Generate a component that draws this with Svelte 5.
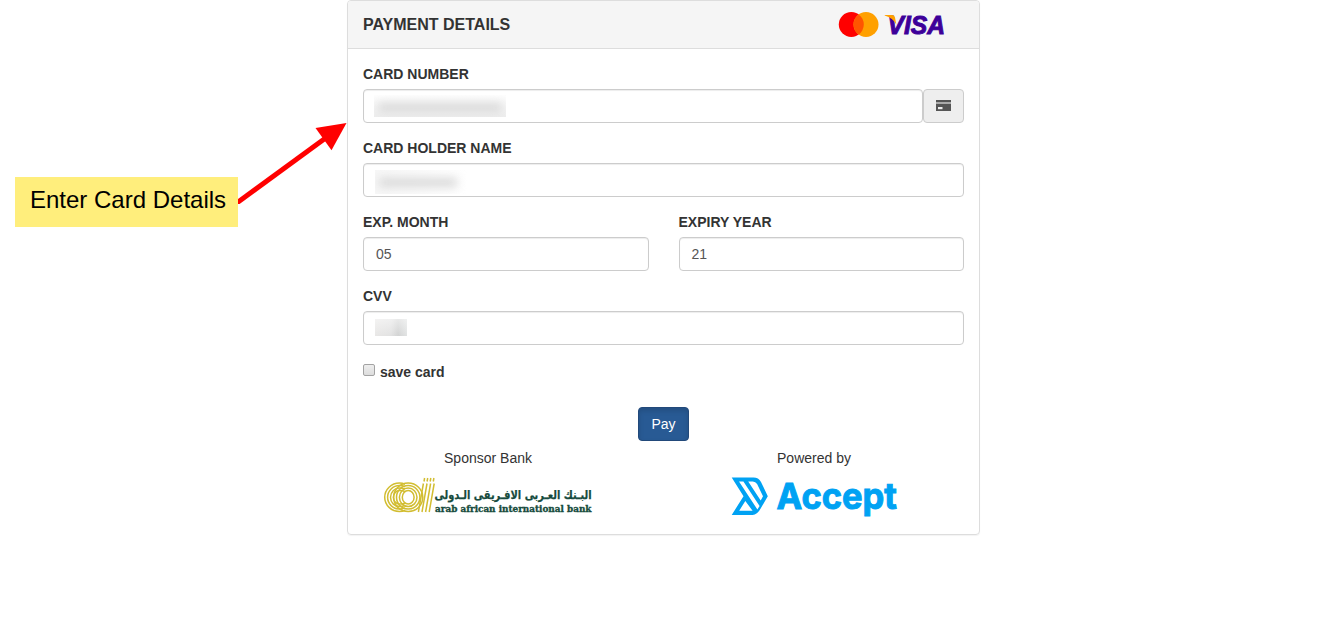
<script>
  let save = $state(false);
  const rings = [0, 1, 2, 3];
</script>

<main>
  <aside class="note">Enter Card Details</aside>
  <section class="panel">
    <header>
      <h1>PAYMENT DETAILS</h1>
      <svg class="brands" width="110" height="28" viewBox="0 0 110 28">
        <circle cx="13.3" cy="13.5" r="12.5" fill="#f00" />
        <circle cx="28" cy="13.5" r="12.5" fill="#ffa000" />
        <path d="M20.65 3.4a12.5 12.5 0 0 1 0 20.2a12.5 12.5 0 0 1 0-20.2z" fill="#ff5500" />
        <text x="49.5" y="22.5" textLength="57.5" lengthAdjust="spacingAndGlyphs" class="visa">VISA</text>
        <path d="M46.7 4h7.6q2.2.4 2.7 2.5l1.3 7Q55 6.8 46.7 4.5z" fill="#ffa000" />
      </svg>
    </header>
    <div class="body">
      <div class="group">
        <label for="num">CARD NUMBER</label>
        <div class="line">
          <div class="control" id="num"><span class="mask number"><i></i></span></div>
          <span class="addon">
            <svg width="15" height="11" viewBox="0 0 15 11"><path d="M0 0h15v11H0z" fill="#555" /><path d="M0 2h15v2H0z" fill="#aaa" /><path d="M2 7h4.5v2.2H2z" fill="#eee" /></svg>
          </span>
        </div>
      </div>
      <div class="group">
        <label for="name">CARD HOLDER NAME</label>
        <div class="control" id="name"><span class="mask holder"><i></i></span></div>
      </div>
      <div class="columns">
        <div class="group"><label for="month">EXP. MONTH</label><div class="control" id="month">05</div></div>
        <div class="group"><label for="year">EXPIRY YEAR</label><div class="control" id="year">21</div></div>
      </div>
      <div class="group">
        <label for="cvv">CVV</label>
        <div class="control" id="cvv"><span class="mask code"></span></div>
      </div>
      <label class="save"><input type="checkbox" bind:checked={save} /><span>save card</span></label>
      <div class="action"><button>Pay</button></div>
      <footer>
        <div class="sponsor">
          <p>Sponsor Bank</p>
          <svg width="212" height="44" viewBox="0 0 212 44">
            <g fill="none" stroke="#d2bd31" stroke-width="1.5">
              {#each rings as r}
                <path d={`M22 ${10.3 + r * 2.4}Q19.5 ${9 + r * 2.5} 16.5 ${9 + r * 2.5}A${14.8 - r * 2.9} ${14.3 - r * 2.5} 0 0 0 16.5 ${37.6 - r * 2.5}Q19.5 ${37.6 - r * 2.5} 22 ${36.3 - r * 2.4}`} />
                <ellipse cx="25.2" cy="23.3" rx={14.6 - r * 2.9} ry={14.3 - r * 2.5} />
                <path d={`M${35.4 + r * 3.6} 38L${40.4 + r * 3.6} 9.5M${41 + r * 3.1} 7.5l.6-3.5`} />
              {/each}
            </g>
            <text class="arabic" x="208.5" y="24.5" direction="rtl" textLength="157" lengthAdjust="spacingAndGlyphs">البـنك العـربى الافـريقى الـدولى</text>
            <text class="bank" x="52" y="37.7" textLength="156.5" lengthAdjust="spacingAndGlyphs">arab african international bank</text>
          </svg>
        </div>
        <div class="powered">
          <p>Powered by</p>
          <svg width="168" height="44" viewBox="0 0 168 44">
            <path d="M.7 3.6H22.5Q27.5 3.6 30 8L36.8 22.2 30.5 33Q26.5 41 21.5 41H.7L12.5 22.3z" fill="#00a2f3" />
            <path d="M8 7.4h4.4L28.6 32l-2.2 3.5zM17.2 7.4h4.6q2.7 0 4.3 2.6l5.9 12.2-2.3 4.2zM14.3 27l7.3 9.8H8.2z" fill="#fff" />
            <text x="45.5" y="35" class="accept" textLength="120.5" lengthAdjust="spacingAndGlyphs">Accept</text>
          </svg>
        </div>
      </footer>
    </div>
  </section>
  <svg class="arrow" width="110" height="84" viewBox="0 0 110 84"><path d="M-2 83.5L89 17" stroke="#f00" stroke-width="5" /><path d="M108.5 3L77.5 8l16 22.3z" fill="#f00" /></svg>
</main>

<style>
  :global(body) { background: #fff; overflow: hidden; }
  * { box-sizing: border-box; }
  svg { overflow: visible; }
  main { position: relative; display: flex; align-items: flex-start; height: 641px; padding-left: 15px; font: 14px/20px "Liberation Sans", Arial, sans-serif; color: #333; }
  .note { flex: none; width: 223px; height: 50px; margin-top: 177px; padding: 8px 0 0 15px; background: #ffee7c; color: #000; font-size: 24px; line-height: 30px; white-space: nowrap; }
  .arrow { position: absolute; left: 238px; top: 120px; overflow: hidden; }
  .panel { flex: none; width: 633px; height: 535px; margin-left: 109px; border: 1px solid #ddd; border-radius: 4px; box-shadow: 0 1px 1px rgba(0,0,0,.05); }
  header { display: flex; align-items: center; justify-content: space-between; height: 48px; padding: 0 31px 0 15px; background: #f5f5f5; border-bottom: 1px solid #ddd; border-radius: 3px 3px 0 0; }
  h1 { margin: 0; font-size: 16px; line-height: 20px; }
  .visa { font: italic bold 26px "Liberation Sans", sans-serif; fill: #3d0099; stroke: #3d0099; stroke-width: 1; }
  .body { padding: 15px; }
  .group { margin-bottom: 15px; }
  label { display: block; font-weight: bold; margin-bottom: 5px; }
  .control { width: 100%; height: 34px; padding: 6px 12px; border: 1px solid #ccc; border-radius: 4px; box-shadow: inset 0 1px 1px rgba(0,0,0,.075); color: #555; }
  .line { display: flex; }
  .addon { display: flex; align-items: center; justify-content: center; flex: none; width: 41px; height: 34px; padding-bottom: 1px; background: #eee; border: 1px solid #ccc; border-radius: 4px; }
  .mask { display: block; overflow: hidden; background: linear-gradient(#fefefe, #eee); }
  .mask i { display: block; height: 9px; background: #d8d8d8; filter: blur(5px); }
  .number { width: 132px; height: 22px; margin: -1px 0 0 -2px; padding: 8px 4px; }
  .holder { width: 92px; height: 24px; margin: 0 0 0 -1px; padding: 8px 10px 8px 4px; background: linear-gradient(90deg, #f7f7f7, #fff); }
  .code { width: 32px; height: 17px; margin: 1px 0 0 -1px; background: linear-gradient(rgba(255,255,255,.5), rgba(255,255,255,0)), linear-gradient(90deg, #e8e7e6, #e2e2e2 50%, #d2d3d3 72%, #e1e3e3); }
  .columns { display: grid; grid-template-columns: 285.5px 285.5px; gap: 30px; }
  .save { display: flex; height: 20px; margin: 17px 0 0; }
  .save input { appearance: none; width: 12px; height: 12px; margin: 2px 5px 0 0; border: 1px solid #a3a3a3; border-radius: 2px; background: linear-gradient(#eee, #ddd); }
  .action { display: flex; justify-content: center; margin-top: 25px; }
  button { width: 51px; height: 34px; padding: 0; border: 1px solid #22497a; border-radius: 4px; background: #285a94; color: #fff; font: inherit; box-shadow: inset 0 3px 5px rgba(0,0,0,.125); }
  footer { display: flex; padding-top: 7px; }
  footer p { margin: 0; text-align: center; }
  footer svg { display: block; margin-top: 6px; }
  .sponsor { width: 210px; margin-left: 20px; }
  .powered { width: 168px; margin-left: 138px; }
  .powered p { padding-right: 2px; }
  .arabic { font: bold 12px "DejaVu Sans", sans-serif; fill: #164b3d; stroke: #164b3d; stroke-width: .25; }
  .bank { font: bold 9.5px "DejaVu Serif", serif; fill: #164b3d; stroke: #164b3d; stroke-width: .35; }
  .accept { font: 700 36px Inter, sans-serif; fill: #00a2f3; stroke: #00a2f3; stroke-width: 1; }
</style>
